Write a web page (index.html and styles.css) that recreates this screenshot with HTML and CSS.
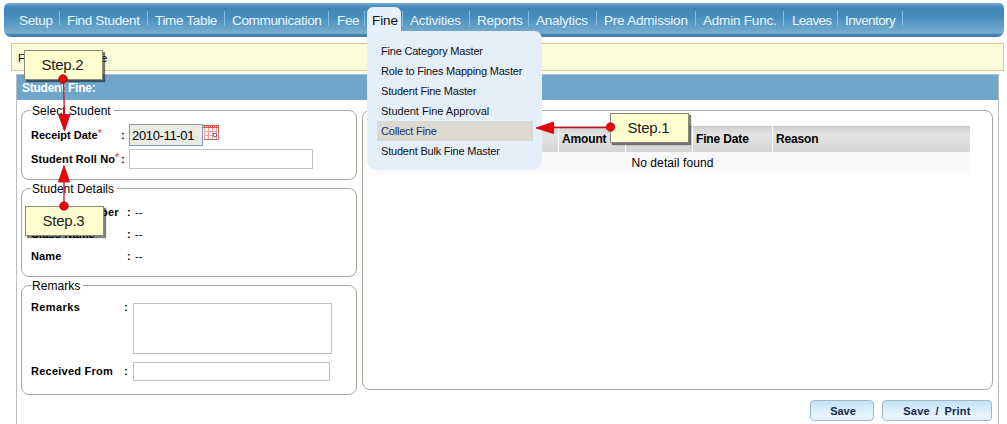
FILE: index.html
```html
<!DOCTYPE html>
<html lang="en">
<head>
<meta charset="utf-8">
<title>Student Fine</title>
<link rel="stylesheet" href="styles.css">
</head>
<body>
<nav class="nav">
  <a class="w-setup"><span>Setup</span></a><a class="w-find"><span>Find Student</span></a><a class="w-time"><span>Time Table</span></a><a class="w-comm"><span>Communication</span></a><a class="w-fee"><span>Fee</span></a>
  <div class="active w-fine"><span>Fine</span>
    <ul class="menu">
      <li><span class="m1">Fine Category Master</span></li>
      <li><span class="m2">Role to Fines Mapping Master</span></li>
      <li><span class="m3">Student Fine Master</span></li>
      <li><span class="m4">Student Fine Approval</span></li>
      <li class="selected"><span class="m5">Collect Fine</span></li>
      <li><span class="m6">Student Bulk Fine Master</span></li>
    </ul>
  </div>
  <a class="w-act"><span>Activities</span></a><a class="w-rep"><span>Reports</span></a><a class="w-ana"><span>Analytics</span></a><a class="w-pre"><span>Pre Admission</span></a><a class="w-adm"><span>Admin Func.</span></a><a class="w-lea"><span>Leaves</span></a><a class="w-inv"><span>Inventory</span></a>
</nav>
<div class="crumb">Fine - Collect Fine</div>
<main class="panel">
  <h1>Student Fine:</h1>
  <div class="columns">
    <div class="left">
      <fieldset class="select">
        <legend>Select Student</legend>
        <div class="row"><b>Receipt Date<i>*</i></b><em>:</em><div class="date">2010-11-01</div>
          <svg class="cal" width="17" height="16" viewBox="0 0 17 16"><path fill="#fff4f0" d="M1 1h15v14H1z"/><path fill="#d85b50" d="M0 0h16v3H0z"/><path stroke="#fbd5cf" stroke-dasharray="1 1" d="M0 1.500h16"/><path fill="none" stroke="#eba59c" d="M1.500 3v12M5.500 3v12M9.500 3v12M13.500 3v12M1 6.500h15M1 10.500h15"/><path fill="none" stroke="#d06a60" d="M1 14.500h14.500v-12"/><path fill="#fff" stroke="#6272b8" d="M10.500 8.500h3v3h-3z"/></svg>
        </div>
        <div class="row"><b class="roll">Student Roll No<i>*</i></b><em>:</em><div class="field rollfield"></div></div>
      </fieldset>
      <fieldset class="details">
        <legend>Student Details</legend>
        <div class="row"><b>Student Number</b><em>:</em>--</div>
        <div class="row"><b>Class Name</b><em>:</em>--</div>
        <div class="row"><b class="name">Name</b><em>:</em>--</div>
      </fieldset>
      <fieldset class="remarks">
        <legend>Remarks</legend>
        <div class="row tall"><b>Remarks</b><em>:</em><div class="field area"></div></div>
        <div class="row"><b class="recv">Received From</b><em>:</em><div class="field from"></div></div>
      </fieldset>
    </div>
    <div class="right">
      <section class="list">
        <div class="thead"><span></span><span>Amount</span><span></span><span>Fine Date</span><span>Reason</span></div>
        <div class="empty">No detail found</div>
      </section>
      <div class="buttons"><button class="save">Save</button><button class="print">Save / Print</button></div>
    </div>
  </div>
</main>
<div class="note step1">Step.1</div>
<div class="note step2">Step.2</div>
<div class="note step3">Step.3</div>
<svg class="arrows" width="1007" height="424" viewBox="0 0 1007 424">
  <g stroke="#c8102a" stroke-width="1.300"><path d="M63.500 79l1 40M64 206v-30M610 127.500h-60"/></g>
  <g fill="#f00008" stroke="#b00810" stroke-width=".8"><path d="M58.500 114.500h11.500l-5.500 16.500zM58.500 182h11l-5.500-16.500zM553.500 122v11.500L536 128z"/><circle cx="63" cy="79" r="4.300"/><circle cx="64" cy="206" r="4.300"/><circle cx="610.500" cy="127" r="4.300"/></g>
</svg>
</body>
</html>
```
FILE: styles.css
```css
* { box-sizing: border-box; }
body { margin: 0; height: 424px; overflow: hidden; background: #fff; font: 11px "Liberation Sans", Arial, sans-serif; color: #000; display: flow-root; }
.nav { margin: 3px 3px 0 4px; height: 34px; padding-left: 7px; display: flex; border-radius: 5px 5px 7px 7px; background: linear-gradient(#78acd0, #4188b9 12%, #468dbd 40%, #78accf 88%, #3e7faf 94%, #3e7faf); font-size: 13.5px; letter-spacing: -.33px; color: #eaf7fc; white-space: nowrap; }
.nav > a { height: 15px; margin-top: 8px; padding-left: 8px; line-height: 20px; border-right: 1px solid #86bfe5; }
.w-setup { width: 49px; }
.w-find { width: 88px; }
.nav > .w-find, .nav > .w-time, .nav > .w-comm { padding-left: 7px; }
.w-time { width: 77px; }
.w-comm { width: 104px; }
.w-fee { width: 36px; }
.w-fine { width: 38px; }
.nav > .w-act, .nav > .w-rep, .nav > .w-ana { padding-left: 7px; letter-spacing: -.25px; }
.w-act { width: 67px; }
.w-rep { width: 59px; }
.w-ana { width: 68px; }
.nav > .w-pre, .nav > .w-adm { padding-left: 7px; letter-spacing: -.2px; }
.w-pre { width: 99px; }
.w-adm { width: 88px; }
.w-lea { width: 54px; }
.nav > .w-lea { letter-spacing: -.7px; }
.w-inv { width: 65px; }
.nav > .w-inv { padding-left: 7px; letter-spacing: -.6px; }
.active { position: relative; margin-top: 4px; height: 24px; color: #111; padding-left: 7px; line-height: 28px; letter-spacing: -.1px; }
.active::before { content: ""; position: absolute; left: 2px; top: 0; width: 34px; height: 25px; background: #e5f0fa; border-radius: 6px 6px 0 0; }
.active::after { content: ""; position: absolute; right: 0; top: 4px; width: 1px; height: 15px; background: #86bfe5; }
.active > span { position: relative; }
.menu { position: absolute; left: 2px; top: 24px; width: 175px; height: 139px; margin: 0; padding: 10px 9px 0 10px; list-style: none; background: #e4effa; border-radius: 0 8px 9px 9px; font-size: 11px; letter-spacing: -.2px; z-index: 2; }
.menu li { height: 20px; line-height: 20px; padding-left: 4px; }
.m4 { letter-spacing: 0; }
.selected { background: #dcd8d2; color: #203068; }
.crumb { margin: 6px 3px 0 11px; height: 28px; border: 1px solid #ddc980; background: #fbfcdc; line-height: 29px; padding-left: 6px; }
.panel { margin: 3px 8px 0 16px; height: 360px; border: 1px solid #b8bdc0; }
.panel h1 { margin: 0; height: 25px; background: #70a6ca; color: #fff; font-size: 12px; letter-spacing: -.25px; line-height: 26px; padding-left: 5px; }
.columns { display: flex; gap: 5px; padding: 4px 0 0 4px; }
.left { width: 336px; display: flex; flex-direction: column; gap: 2px; }
fieldset { margin: 0; min-width: 0; padding: 0 0 0 10px; border: 1px solid #a5a69c; border-radius: 8px; }
legend { height: 13px; line-height: 14px; font-size: 12px; padding: 0 3px 0 1px; margin-left: -1px; letter-spacing: .05px; }
.row { display: flex; align-items: center; font-size: 11px; }
.row b { white-space: nowrap; width: 90px; margin-left: -1px; }
.row b i { color: #d33; font: 11px "Liberation Sans", Arial, sans-serif; position: relative; top: -2px; }
.row .roll { letter-spacing: .1px; }
.row em { font-style: normal; font-weight: bold; width: 8px; }
.field { border: 1px solid #bfc2c6; background: #fff; }
.select { height: 76px; }
.select .row { height: 22px; margin-top: 7px; }
.select .row + .row { height: 20px; margin-top: 3px; }
.date { width: 74px; height: 22px; border: 1px solid #7f9db9; border-top-color: #999; background: #ebebe6; font-size: 13px; letter-spacing: -.35px; line-height: 21px; padding-left: 2px; }
.cal { align-self: flex-start; margin-top: 1px; }
.rollfield { width: 184px; height: 20px; }
.details { height: 95px; }
.details legend + .row { margin-top: 6px; }
.details .row { height: 22px; }
.details .row b { width: 96px; letter-spacing: .15px; }
.remarks { height: 116px; }
.remarks .row { height: 20px; margin-top: 7px; }
.remarks .row b { width: 93px; letter-spacing: .4px; }
.remarks .row .recv { letter-spacing: .25px; }
.remarks .row em { width: 9px; }
.remarks .tall { height: 51px; margin-top: 11px; align-items: flex-start; line-height: 9px; }
.area { width: 199px; height: 51px; }
.from { width: 197px; height: 19px; }
.right { width: 631px; padding-top: 6px; }
.list { height: 280px; border: 1px solid #a5a69c; border-radius: 8px; padding: 15px 22px 0 14px; }
.thead { display: grid; grid-template-columns: 181px 66px 66px 79px 1fr; gap: 1px; height: 25px; }
.thead span { background: linear-gradient(#d0d0d0, #e4e4e4 30%, #d4d4d4); border-top: 1px solid #c4c4c4; font-size: 12px; letter-spacing: -.15px; font-weight: bold; line-height: 25px; padding-left: 3px; }
.empty { height: 22px; background: #fafafa; text-align: center; line-height: 24px; font-size: 12px; letter-spacing: .1px; padding-right: 2px; }
.buttons { display: flex; justify-content: flex-end; gap: 8px; margin: 10px 1px 0 0; }
.buttons button { height: 21px; padding: 0; border: 1px solid #a2b7c6; border-radius: 4px; background: linear-gradient(#c2e3f8, #dceefa 50%, #edf6fc); font: bold 11px "Liberation Sans", Arial, sans-serif; color: #15294c; }
.buttons .save { width: 64px; padding-left: 2px; }
.buttons .print { width: 110px; letter-spacing: .2px; word-spacing: 2.5px; }
.note { position: absolute; z-index: 5; width: 79px; height: 30px; background: #ffffcf; border: 1px solid #8b8b75; box-shadow: 2px 2px 1px rgba(0, 0, 0, .5); font-size: 15px; letter-spacing: -.25px; line-height: 28px; padding-right: 2px; text-align: center; color: #222; }
.step1 { left: 610px; top: 113px; }
.step2 { left: 24px; top: 50px; }
.step3 { left: 25px; top: 206px; }
.arrows { position: absolute; left: 0; top: 0; z-index: 6; pointer-events: none; }
```
